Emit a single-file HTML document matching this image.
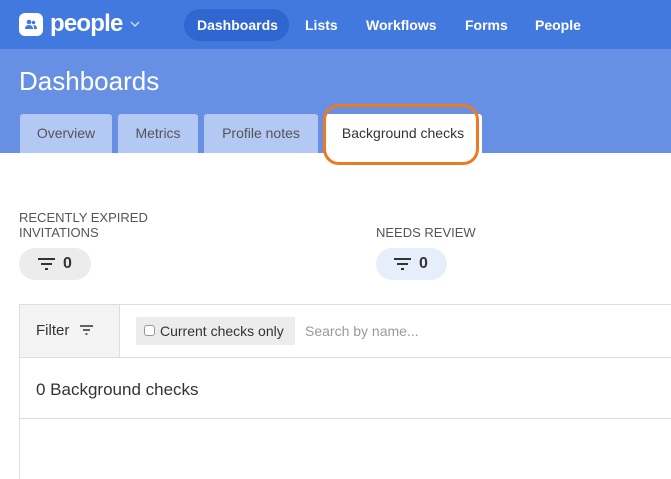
<!DOCTYPE html>
<html><head><meta charset="utf-8"><style>
*{box-sizing:border-box;margin:0;padding:0}
html,body{width:671px;height:479px;overflow:hidden}
body{background:#fff;font-family:"Liberation Sans",sans-serif;position:relative;color:#333}
.top{position:absolute;left:0;top:0;width:671px;height:49px;background:#4279de}
.sub{position:absolute;left:0;top:49px;width:671px;height:104px;background:#6790e4}
.a{position:absolute;white-space:nowrap}
.nav{color:#fff;font-size:14px;font-weight:bold;top:17px}
.pill{position:absolute;left:184px;top:9px;width:105px;height:32px;border-radius:16px;background:#2f66cf}
.tab{position:absolute;top:114px;height:39px;background:#b3c8f3;border-radius:3px 3px 0 0;font-size:14px;color:#555;text-align:center;line-height:38px}
.cap{font-size:13px;color:#555;text-transform:uppercase;line-height:15px}
.chip{position:absolute;height:32px;border-radius:16px;font-weight:bold;font-size:16px;color:#333}
</style></head><body>
<div class="top"></div>
<div class="pill"></div>
<div class="a" style="left:19px;top:13px;width:24px;height:23px;background:#fff;border-radius:6px"></div>
<svg class="a" style="left:23px;top:17px" width="16" height="16" viewBox="0 0 16 16"><circle cx="6" cy="5" r="2.3" fill="#4279de"/><circle cx="10.5" cy="5.5" r="1.8" fill="#4279de"/><path d="M2 12c0-3 2-4 4-4s4 1 4 4z" fill="#4279de"/><path d="M10.5 8c2 0 3.5 1 3.5 4h-3c0-1.5-.3-3-.5-4z" fill="#4279de"/></svg>
<div class="a" style="left:50px;top:10px;color:#fff;font-size:24px;font-weight:bold;letter-spacing:-0.8px">people</div>
<svg class="a" style="left:130px;top:20px" width="10" height="8" viewBox="0 0 10 8"><path d="M1 2l4 4 4-4" stroke="#c8d8f8" stroke-width="1.5" fill="none"/></svg>
<div class="a nav" style="left:197px">Dashboards</div>
<div class="a nav" style="left:305px">Lists</div>
<div class="a nav" style="left:366px">Workflows</div>
<div class="a nav" style="left:465px">Forms</div>
<div class="a nav" style="left:535px">People</div>
<div class="sub"></div>
<div class="a" style="left:19px;top:66px;font-size:26px;color:#fff">Dashboards</div>
<div class="tab" style="left:20px;width:92px">Overview</div>
<div class="tab" style="left:118px;width:80px">Metrics</div>
<div class="tab" style="left:204px;width:114px">Profile notes</div>
<div class="tab" style="left:324px;width:158px;background:#fff;color:#333">Background checks</div>
<div class="a" style="left:323px;top:104px;width:156px;height:61px;border:3px solid #ec7a22;border-radius:16px"></div>
<div class="a cap" style="left:19px;top:210px">Recently expired<br>invitations</div>
<div class="a cap" style="left:376px;top:225px">Needs review</div>
<div class="chip" style="left:19px;top:248px;width:72px;background:#ececec"></div>
<div class="chip" style="left:376px;top:248px;width:71px;background:#e6eefc"></div>
<svg class="a" style="left:37px;top:257px" width="20" height="14" viewBox="0 0 20 14"><path d="M1 2h17M4 7h11M8 12h3" stroke="#333" stroke-width="2"/></svg>
<div class="a" style="left:63px;top:255px;font-weight:bold;font-size:16px">0</div>
<svg class="a" style="left:393px;top:257px" width="20" height="14" viewBox="0 0 20 14"><path d="M1 2h17M4 7h11M8 12h3" stroke="#333" stroke-width="2"/></svg>
<div class="a" style="left:419px;top:255px;font-weight:bold;font-size:16px">0</div>
<div class="a" style="left:19px;top:304px;width:652px;height:175px;border-left:1px solid #ddd;border-top:1px solid #ddd"></div>
<div class="a" style="left:20px;top:305px;width:100px;height:52px;background:#f3f3f3;border-right:1px solid #ddd"></div>
<div class="a" style="left:36px;top:322px;font-size:15px">Filter</div>
<svg class="a" style="left:80px;top:325px" width="14" height="10" viewBox="0 0 14 10"><path d="M0 1h13M3 5h7M5.5 9h2" stroke="#333" stroke-width="1.5"/></svg>
<div class="a" style="left:136px;top:317px;width:159px;height:28px;background:#ececec;border-radius:2px"></div>
<div class="a" style="left:144px;top:325px;width:11px;height:11px;border:1px solid #999;border-radius:3px;background:#fff"></div>
<div class="a" style="left:160px;top:323px;font-size:14px">Current checks only</div>
<div class="a" style="left:305px;top:323px;font-size:14px;color:#999">Search by name...</div>
<div class="a" style="left:20px;top:357px;width:651px;border-top:1px solid #ddd"></div>
<div class="a" style="left:36px;top:380px;font-size:17px">0 Background checks</div>
<div class="a" style="left:20px;top:418px;width:651px;border-top:1px solid #ddd"></div>
</body></html>
